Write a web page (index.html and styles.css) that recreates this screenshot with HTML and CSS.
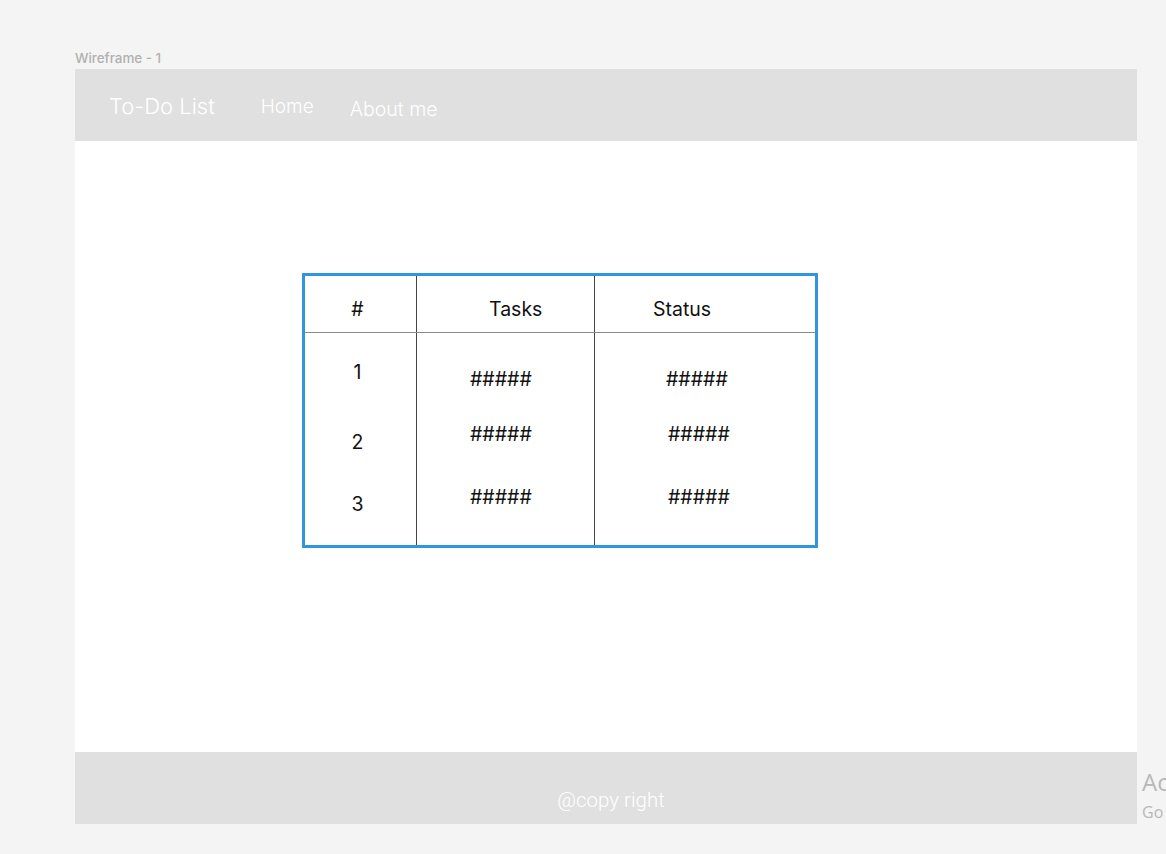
FILE: index.html
```html
<!DOCTYPE html>
<html>
<head>
<meta charset="utf-8">
<link rel="stylesheet" href="styles.css">
</head>
<body>
<div class="canvas">
  <div class="frame-label">Wireframe - 1</div>
  <div class="frame">
    <header class="nav">
      <span class="brand">To-Do List</span>
      <span class="link link-home">Home</span>
      <span class="link link-about">About me</span>
    </header>
    <main class="main">
      <div class="tbl">
        <div class="thead">
          <div class="th th-num">#</div>
          <div class="th th-task">Tasks</div>
          <div class="th th-status">Status</div>
        </div>
        <div class="tbody">
          <div class="col col-num">
            <div class="cell n1">1</div>
            <div class="cell n2">2</div>
            <div class="cell n3">3</div>
          </div>
          <div class="col col-task">
            <div class="cell t1">#####</div>
            <div class="cell t2">#####</div>
            <div class="cell t3">#####</div>
          </div>
          <div class="col col-status">
            <div class="cell s1">#####</div>
            <div class="cell s2">#####</div>
            <div class="cell s3">#####</div>
          </div>
        </div>
      </div>
    </main>
    <footer class="foot">@copy right</footer>
  </div>
  <div class="watermark">
    <div class="wm-big">Activate Windows</div>
    <div class="wm-small">Go to Settings to activate Windows.</div>
  </div>
</div>
</body>
</html>
```

FILE: styles.css
```css
html, body {
  margin: 0;
  padding: 0;
  background: #f4f4f4;
  overflow: hidden;
}
.canvas {
  position: relative;
  width: 1166px;
  height: 854px;
  overflow: hidden;
  padding: 50px 0 0 75px;
  box-sizing: border-box;
  font-family: "Inter", "Liberation Sans", sans-serif;
}
.frame-label {
  font-size: 13.4px;
  font-weight: 500;
  line-height: 16px;
  color: #b0b0b0;
  height: 19px;
}
.frame {
  width: 1062px;
  display: flex;
  flex-direction: column;
}
.nav {
  height: 72px;
  background: #e0e0e0;
  display: flex;
  align-items: flex-start;
  color: #ffffff;
  box-sizing: border-box;
  padding-left: 34px;
}
.brand {
  font-size: 22px;
  font-weight: 300;
  line-height: 26px;
  margin-top: 24px;
}
.link {
  font-size: 19px;
  font-weight: 300;
  line-height: 22px;
}
.link-home {
  margin-left: 46px;
  margin-top: 27px;
}
.link-about {
  font-size: 19.6px;
  margin-left: 36px;
  margin-top: 29px;
}
.main {
  height: 611px;
  background: #ffffff;
  padding: 132px 0 0 227px;
  box-sizing: border-box;
}
.tbl {
  width: 516px;
  height: 275px;
  border: 3px solid #2f95dd;
  box-sizing: border-box;
  display: flex;
  flex-direction: column;
  color: #111;
  font-size: 19.5px;
  line-height: 20px;
}
.thead {
  display: grid;
  grid-template-columns: 112px 178px 1fr;
  height: 57px;
  border-bottom: 1px solid #8a8a8a;
  box-sizing: border-box;
}
.th {
  padding-top: 23px;
  box-sizing: border-box;
}
.th-num {
  border-right: 1px solid #444;
  text-align: center;
  padding-right: 6px;
}
.th-task {
  border-right: 1px solid #444;
  padding-left: 72px;
}
.th-status {
  padding-left: 58px;
}
.tbody {
  flex: 1;
  display: grid;
  grid-template-columns: 112px 178px 1fr;
}
.col {
  display: flex;
  flex-direction: column;
}
.col-num {
  border-right: 1px solid #444;
  text-align: center;
  padding-right: 6px;
}
.col-task {
  border-right: 1px solid #444;
  padding-left: 53px;
}
.col-status {
  padding-left: 71px;
}
.n1 { margin-top: 29px; }
.n2 { margin-top: 50px; }
.n3 { margin-top: 42px; }
.t1, .s1 { margin-top: 36px; }
.t2, .s2 { margin-top: 35px; }
.t3, .s3 { margin-top: 43px; }
.s2, .s3 { padding-left: 2px; }
.foot {
  height: 72px;
  background: #e0e0e0;
  color: #ffffff;
  font-family: "Roboto", "Liberation Sans", sans-serif;
  font-weight: 300;
  font-size: 20.5px;
  line-height: 22px;
  text-align: center;
  padding-top: 37px;
  padding-left: 10px;
  box-sizing: border-box;
}
.watermark {
  position: absolute;
  left: 1142px;
  top: 766px;
  white-space: nowrap;
  color: #b8b8b8;
  font-family: "Open Sans", "Liberation Sans", sans-serif;
}
.wm-big {
  font-size: 24px;
  line-height: 32px;
}
.wm-small {
  font-size: 16px;
  line-height: 24px;
  margin-top: 2px;
}
```
